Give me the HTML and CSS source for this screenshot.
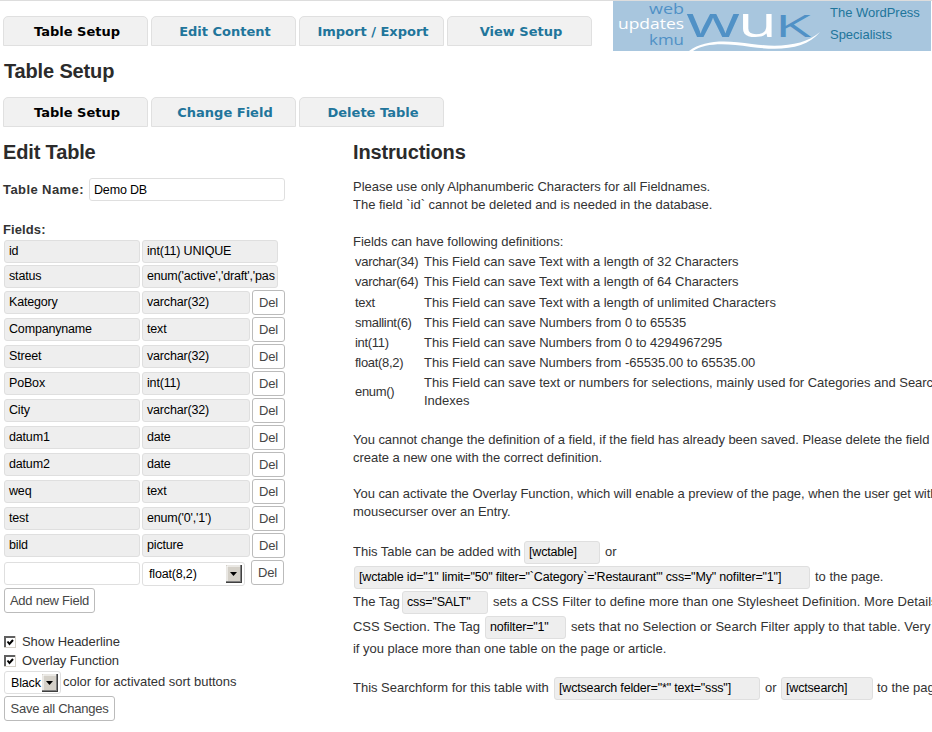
FILE: index.html
```html
<!DOCTYPE html>
<html lang="en">
<head>
<meta charset="utf-8">
<title>Table Setup</title>
<link rel="stylesheet" href="styles.css">
</head>
<body>
<header class="top">
  <nav class="tabs">
    <a class="tab active"><span>Table Setup</span></a>
    <a class="tab"><span>Edit Content</span></a>
    <a class="tab"><span>Import / Export</span></a>
    <a class="tab"><span>View Setup</span></a>
  </nav>
  <a class="banner">
    <svg class="logo" width="210" height="50" viewBox="0 0 210 50">
      <g class="logo-small">
        <text x="36" y="13" textLength="35" lengthAdjust="spacingAndGlyphs" fill="#5091c6">web</text>
        <text x="5" y="28" textLength="66" lengthAdjust="spacingAndGlyphs" fill="#fff">updates</text>
        <text x="36" y="43.500" textLength="35" lengthAdjust="spacingAndGlyphs" fill="#5091c6">kmu</text>
      </g>
      <g class="logo-big">
        <text x="73" y="36" font-size="42" textLength="54" lengthAdjust="spacingAndGlyphs" fill="#5091c6">w</text>
        <text x="125" y="36" font-size="42" textLength="39" lengthAdjust="spacingAndGlyphs" fill="#fff">u</text>
        <text x="162" y="36" font-size="31" textLength="36" lengthAdjust="spacingAndGlyphs" fill="#5091c6">K</text>
      </g>
      <path d="M76 50C91 39 112 39 139 43C168 47 192 44 207 31C193 48 168 50 138 46C111 42 93 42 80 50Z" fill="#fff"/>
    </svg>
    <span class="slogan"><span class="s1">The WordPress</span><br><span class="s2">Specialists</span></span>
  </a>
</header>
<h2 class="page-title"><span>Table Setup</span></h2>
<nav class="tabs">
  <a class="tab active"><span>Table Setup</span></a>
  <a class="tab"><span>Change Field</span></a>
  <a class="tab"><span>Delete Table</span></a>
</nav>
<div class="columns">
  <section class="left">
    <h2><span>Edit Table</span></h2>
    <div class="name-row"><b>Table Name:</b><input class="box" value="Demo DB"></div>
    <b class="fields-label">Fields:</b>
    <div class="row fixed"><span class="box ro name">id</span><span class="box ro wide">int(11) UNIQUE</span></div>
    <div class="row fixed"><span class="box ro name">status</span><span class="box ro wide">enum('active','draft','pas</span></div>
    <div class="row"><span class="box ro name">Kategory</span><span class="box ro type">varchar(32)</span><button>Del</button></div>
    <div class="row"><span class="box ro name">Companyname</span><span class="box ro type">text</span><button>Del</button></div>
    <div class="row"><span class="box ro name">Street</span><span class="box ro type">varchar(32)</span><button>Del</button></div>
    <div class="row"><span class="box ro name">PoBox</span><span class="box ro type">int(11)</span><button>Del</button></div>
    <div class="row"><span class="box ro name">City</span><span class="box ro type">varchar(32)</span><button>Del</button></div>
    <div class="row"><span class="box ro name">datum1</span><span class="box ro type">date</span><button>Del</button></div>
    <div class="row"><span class="box ro name">datum2</span><span class="box ro type">date</span><button>Del</button></div>
    <div class="row"><span class="box ro name">weq</span><span class="box ro type">text</span><button>Del</button></div>
    <div class="row"><span class="box ro name">test</span><span class="box ro type">enum('0','1')</span><button>Del</button></div>
    <div class="row"><span class="box ro name">bild</span><span class="box ro type">picture</span><button>Del</button></div>
    <div class="row new">
      <input class="box name">
      <span class="box select def">float(8,2)<svg class="arrow" width="16" height="18" viewBox="0 0 16 18"><path d="M0 0H16V18H0Z" fill="#404040"/><path d="M0 0H15V17H0Z" fill="#808080"/><path d="M0 0H14V16H0Z" fill="#d4d0c8"/><path d="M1 16V1H14" stroke="#fff" fill="none"/><path d="M4 7H11L7.500 11Z" fill="#000"/></svg></span>
      <button>Del</button>
    </div>
    <button class="add">Add new Field</button>
    <label class="check first"><svg width="12" height="12" viewBox="0 0 12 12"><path d="M0 0H12V12H0Z" fill="#d4d0c8"/><path d="M0 0H11V11H0Z" fill="#606060"/><path d="M2 2H11V11H2Z" fill="#fff"/><path d="M3.500 5.500L5.500 8L9 4" fill="none" stroke="#000" stroke-width="2"/></svg><span>Show Headerline</span></label>
    <label class="check"><svg width="12" height="12" viewBox="0 0 12 12"><path d="M0 0H12V12H0Z" fill="#d4d0c8"/><path d="M0 0H11V11H0Z" fill="#606060"/><path d="M2 2H11V11H2Z" fill="#fff"/><path d="M3.500 5.500L5.500 8L9 4" fill="none" stroke="#000" stroke-width="2"/></svg><span>Overlay Function</span></label>
    <div class="color-row"><span class="box select color">Black<svg class="arrow" width="16" height="18" viewBox="0 0 16 18"><path d="M0 0H16V18H0Z" fill="#404040"/><path d="M0 0H15V17H0Z" fill="#808080"/><path d="M0 0H14V16H0Z" fill="#d4d0c8"/><path d="M1 16V1H14" stroke="#fff" fill="none"/><path d="M4 7H11L7.500 11Z" fill="#000"/></svg></span><span>color for activated sort buttons</span></div>
    <button class="save">Save all Changes</button>
  </section>
  <section class="right">
    <h2><span>Instructions</span></h2>
    <p class="intro"><span>Please use only Alphanumberic Characters for all Fieldnames.</span><br><span>The field `id` cannot be deleted and is needed in the database.</span></p>
    <p class="defs-title"><span>Fields can have following definitions:</span></p>
    <div class="defs">
      <span class="def-name">varchar(34)</span><span>This Field can save Text with a length of 32 Characters</span>
      <span class="def-name">varchar(64)</span><span>This Field can save Text with a length of 64 Characters</span>
      <span class="def-name">text</span><span>This Field can save Text with a length of unlimited Characters</span>
      <span class="def-name">smallint(6)</span><span>This Field can save Numbers from 0 to 65535</span>
      <span class="def-name">int(11)</span><span>This Field can save Numbers from 0 to 4294967295</span>
      <span class="def-name">float(8,2)</span><span>This Field can save Numbers from -65535.00 to 65535.00</span>
      <span class="def-name">enum()</span><span>This Field can save text or numbers for selections, mainly used for Categories and Search<br>Indexes</span>
    </div>
    <p class="para">You cannot change the definition of a field, if the field has already been saved. Please delete the field and<br>create a new one with the correct definition.</p>
    <p class="para second">You can activate the Overlay Function, which will enable a preview of the page, when the user get with the<br>mousecurser over an Entry.</p>
    <div class="line"><span class="t1">This Table can be added with</span><span class="box ro c1">[wctable]</span><span>or</span></div>
    <div class="line"><span class="box ro c2">[wctable id="1" limit="50" filter="`Category`='Restaurant'" css="My" nofilter="1"]</span><span>to the page.</span></div>
    <div class="line"><span class="t3">The Tag</span><span class="box ro c3">css="SALT"</span><span class="loose">sets a CSS Filter to define more than one Stylesheet Definition. More Details in</span></div>
    <div class="line"><span class="t4">CSS Section. The Tag</span><span class="box ro c4">nofilter="1"</span><span class="loose">sets that no Selection or Search Filter apply to that table. Very useful</span></div>
    <p class="tail">if you place more than one table on the page or article.</p>
    <div class="line search"><span class="t5">This Searchform for this table with</span><span class="box ro c5">[wctsearch felder="*" text="sss"]</span><span class="t6">or</span><span class="box ro c6">[wctsearch]</span><span>to the page.</span></div>
  </section>
</div>
</body>
</html>
```
FILE: styles.css
```css
* { box-sizing: border-box; }
body { margin: 0; width: 932px; height: 732px; overflow: hidden; background: #fff; color: #333;
  font: 13px/18px "Liberation Sans", Arial, sans-serif; letter-spacing: -.02px; white-space: nowrap; }
h2 { margin: 0; font-size: 20px; line-height: 24px; letter-spacing: -.15px; color: #2b2b2b; }
p { margin: 0; }
svg { display: block; flex: none; }

.top { display: flex; border-top: 1px solid #ddd; height: 59px; }
.top .tabs { padding-top: 15px; }
.tabs { display: flex; gap: 3px; padding-left: 3px; }
.tab { width: 145px; height: 30px; border: 1px solid #e0e0e0; border-radius: 5px 5px 0 0; background: #f1f1f1;
  color: #21759b; text-align: center; font: bold 13px/29px "DejaVu Sans", Verdana, sans-serif; letter-spacing: 0; padding-left: 3px; }
.tab.active { color: #000; }
.banner { display: flex; width: 318px; height: 50px; margin-left: 21px; background: #a8c6de; color: #21759b; }
.logo-small { font: 15px "Open Sans", sans-serif; letter-spacing: 0; }
.logo-big { font-family: "Open Sans", sans-serif; font-weight: 500; letter-spacing: 0; stroke-width: .5px; }
.slogan { padding: 1px 0 0 7px; line-height: 22px; }
.page-title { height: 38px; padding-left: 4px; }

.columns { display: flex; padding: 13px 0 0 3px; }
.left { width: 350px; flex: none; }
.name-row { display: flex; height: 23px; margin-top: 14px; align-items: center; }
.name-row b { width: 86px; letter-spacing: .42px; }
.name-row .box { width: 196px; }
.fields-label { display: block; height: 18px; margin: 20px 0 1px; letter-spacing: .1px; }

.box { display: block; flex: none; height: 23px; border: 1px solid #dfdfdf; border-radius: 3px; background: #fff; color: #000;
  font: 12.5px/21px "Liberation Sans", Arial, sans-serif; letter-spacing: -.17px; padding: 0 4px; overflow: hidden; outline: none; }
.ro { background: #eee; }
.row { display: flex; height: 27px; padding: 1px 0 0 1px; gap: 2px; }
.row.fixed { height: 25px; padding-top: 0; }
.name { width: 136px; }
.wide { width: 136px; }
.type { width: 108px; }
button { display: block; width: 33px; height: 25px; margin: -1px 0 0; padding: 0; border: 1px solid #bbb; border-radius: 3px; background: #fff;
  color: #464646; font: 13px/20px "Liberation Sans", Arial, sans-serif; letter-spacing: -.25px; }
.row button { letter-spacing: -.1px; }
.new { height: 28px; padding-top: 2px; }
.new button { margin: -2px 0 0 4px; }
.select { display: flex; justify-content: space-between; padding: 2px 2px 0 6px; line-height: 19px; }
.def { width: 103px; height: 24px; }
.add { width: 91px; margin: 0 0 0 1px; }
.check { display: flex; align-items: center; height: 19px; padding-left: 1px; gap: 6px; letter-spacing: -.08px; }
.first { margin-top: 19px; }
.color-row { display: flex; align-items: center; gap: 2px; padding-left: 1px; height: 24px; }
.color { width: 57px; height: 23px; padding-left: 6px; }
.save { width: 111px; margin: 2px 0 0 1px; }

.right { width: 579px; overflow: hidden; flex: none; }
.intro { margin-top: 14px; }
.defs-title { margin-top: 19px; }
.defs { display: grid; grid-template-columns: 69px auto; grid-template-rows: repeat(6, 20.25px) 36px; align-items: center; padding: 1px 0 0 2px; }
.def-name { letter-spacing: -.3px; }
.para { margin-top: 21px; letter-spacing: -.04px; }
.para.second { margin-top: 18px; margin-bottom: 18px; line-height: 18.5px; }
.line { display: flex; height: 25px; align-items: center; }
.line span { flex: none; }
.line .loose { letter-spacing: .05px; }
.t1 { width: 171px; }
.t3 { width: 49px; }
.t4 { width: 132px; }
.t5 { width: 201px; }
.c1 { width: 76px; margin-right: 5px; }
.c2 { width: 456px; margin: 0 5px 0 1px; }
.c3 { width: 86px; margin-right: 5px; }
.c4 { width: 81px; margin-right: 5px; }
.c5 { width: 206px; margin-right: 5px; }
.t6 { width: 16px; }
.c6 { width: 92px; margin-right: 4px; }
.search { margin-top: 18px; }
```
